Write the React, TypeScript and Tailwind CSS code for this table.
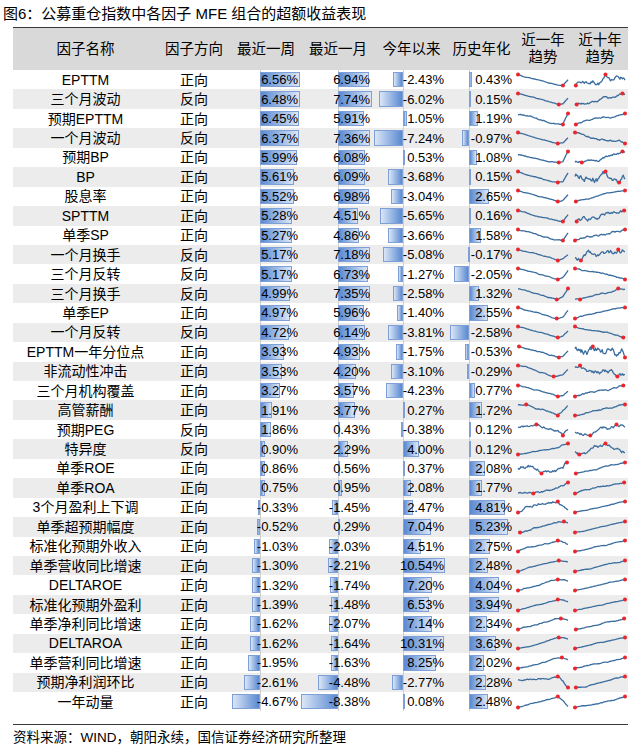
import React from "react";

type Row = {
  name: string;
  dir: string;
  week: number;
  month: number;
  ytd: number;
  hist: number;
};

const rows: Row[] = [
  { name: "EPTTM", dir: "正向", week: 6.56, month: 6.94, ytd: -2.43, hist: 0.43 },
  { name: "三个月波动", dir: "反向", week: 6.48, month: 7.74, ytd: -6.02, hist: 0.15 },
  { name: "预期EPTTM", dir: "正向", week: 6.45, month: 5.91, ytd: 1.05, hist: 1.19 },
  { name: "一个月波动", dir: "反向", week: 6.37, month: 7.36, ytd: -7.24, hist: -0.97 },
  { name: "预期BP", dir: "正向", week: 5.99, month: 6.08, ytd: 0.53, hist: 1.08 },
  { name: "BP", dir: "正向", week: 5.61, month: 6.09, ytd: -3.68, hist: 0.15 },
  { name: "股息率", dir: "正向", week: 5.52, month: 6.98, ytd: -3.04, hist: 2.65 },
  { name: "SPTTM", dir: "正向", week: 5.28, month: 4.51, ytd: -5.65, hist: 0.16 },
  { name: "单季SP", dir: "正向", week: 5.27, month: 4.86, ytd: -3.66, hist: 1.58 },
  { name: "一个月换手", dir: "反向", week: 5.17, month: 7.18, ytd: -5.08, hist: -0.17 },
  { name: "三个月反转", dir: "反向", week: 5.17, month: 6.73, ytd: -1.27, hist: -2.05 },
  { name: "三个月换手", dir: "反向", week: 4.99, month: 7.35, ytd: -2.58, hist: 1.32 },
  { name: "单季EP", dir: "正向", week: 4.97, month: 5.96, ytd: -1.4, hist: 2.55 },
  { name: "一个月反转", dir: "反向", week: 4.72, month: 6.14, ytd: -3.81, hist: -2.58 },
  { name: "EPTTM一年分位点", dir: "正向", week: 3.93, month: 4.93, ytd: -1.75, hist: -0.53 },
  { name: "非流动性冲击", dir: "正向", week: 3.53, month: 4.2, ytd: -3.1, hist: -0.29 },
  { name: "三个月机构覆盖", dir: "正向", week: 3.27, month: 3.57, ytd: -4.23, hist: 0.77 },
  { name: "高管薪酬", dir: "正向", week: 1.91, month: 3.77, ytd: 0.27, hist: 1.72 },
  { name: "预期PEG", dir: "反向", week: 1.86, month: 0.43, ytd: -0.38, hist: 0.12 },
  { name: "特异度", dir: "反向", week: 0.9, month: 2.29, ytd: 4.0, hist: 0.12 },
  { name: "单季ROE", dir: "正向", week: 0.86, month: 0.56, ytd: 0.37, hist: 2.08 },
  { name: "单季ROA", dir: "正向", week: 0.75, month: 0.95, ytd: 2.08, hist: 1.77 },
  { name: "3个月盈利上下调", dir: "正向", week: -0.33, month: -1.45, ytd: 2.47, hist: 4.81 },
  { name: "单季超预期幅度", dir: "正向", week: -0.52, month: 0.29, ytd: 7.04, hist: 5.23 },
  { name: "标准化预期外收入", dir: "正向", week: -1.03, month: -2.03, ytd: 4.51, hist: 2.75 },
  { name: "单季营收同比增速", dir: "正向", week: -1.3, month: -2.21, ytd: 10.54, hist: 2.48 },
  { name: "DELTAROE", dir: "正向", week: -1.32, month: -1.74, ytd: 7.2, hist: 4.04 },
  { name: "标准化预期外盈利", dir: "正向", week: -1.39, month: -1.48, ytd: 6.53, hist: 3.94 },
  { name: "单季净利同比增速", dir: "正向", week: -1.62, month: -2.07, ytd: 7.14, hist: 2.34 },
  { name: "DELTAROA", dir: "正向", week: -1.62, month: -1.64, ytd: 10.31, hist: 3.63 },
  { name: "单季营利同比增速", dir: "正向", week: -1.95, month: -1.63, ytd: 8.25, hist: 2.02 },
  { name: "预期净利润环比", dir: "正向", week: -2.61, month: -4.48, ytd: -2.77, hist: 2.28 },
  { name: "一年动量", dir: "正向", week: -4.67, month: -8.38, ytd: 0.08, hist: 2.48 },
];

// seeded random so the sparklines stay the same between renders
function rng(seed: number) {
  let a = seed >>> 0;
  return () => {
    a = (a + 0x6d2b79f5) >>> 0;
    let t = a;
    t = Math.imul(t ^ (t >>> 15), t | 1);
    t ^= t + Math.imul(t ^ (t >>> 7), t | 61);
    return ((t ^ (t >>> 14)) >>> 0) / 4294967296;
  };
}

function yearSeries(r: Row, i: number) {
  const rand = rng(i * 97 + 13);
  const pts: number[] = [];
  let v = 0;
  const first = r.ytd - r.month;
  const mid = r.month - r.week;
  for (let k = 0; k < 50; k++) {
    let step = 0;
    if (k < 40) step = first / 40;
    else if (k < 45) step = mid / 5;
    else step = r.week / 5;
    v += step + (rand() - 0.5) * 0.55;
    pts.push(v);
  }
  return pts;
}

function tenYearSeries(r: Row, i: number) {
  const rand = rng(i * 31 + 7);
  const pts: number[] = [];
  let v = 0;
  for (let k = 0; k < 60; k++) {
    v += r.hist / 5 + (rand() - 0.5) * 1.6;
    pts.push(v);
  }
  return pts;
}

const Spark = ({ pts, w }: { pts: number[]; w: number }) => {
  const h = 16;
  const min = Math.min(...pts);
  const max = Math.max(...pts);
  const span = max - min || 1;
  const xy = pts.map((p, k) => [
    2 + (k / (pts.length - 1)) * (w - 4),
    2.5 + (1 - (p - min) / span) * (h - 5),
  ]);
  const iMin = pts.indexOf(min);
  const iMax = pts.indexOf(max);
  return (
    <svg width={w} height={h} className="block">
      <polyline
        points={xy.map((p) => p.join(",")).join(" ")}
        fill="none"
        stroke="#3b6d9e"
        strokeWidth={1.3}
        strokeLinejoin="round"
      />
      <circle cx={xy[iMax][0]} cy={xy[iMax][1]} r={2} fill="#e8262c" />
      <circle cx={xy[iMin][0]} cy={xy[iMin][1]} r={2} fill="#e8262c" />
    </svg>
  );
};

const fmt = (v: number) => v.toFixed(2) + "%";

const BarCell = ({ v, axis, scale, pr }: { v: number; axis: number; scale: number; pr: string }) => {
  const len = Math.abs(v) * scale;
  return (
    <div className={`relative h-full flex items-center justify-end ${pr}`}>
      <div className="absolute top-0 bottom-0 w-px bg-[#cfcfcf]" style={{ left: axis }} />
      {v >= 0 ? (
        <div
          className="absolute top-[2px] bottom-[2px] border border-[#7ea0d6] bg-gradient-to-r from-[#5a89d0] to-[#dbe6f6]"
          style={{ left: axis, width: len }}
        />
      ) : (
        <div
          className="absolute top-[2px] bottom-[2px] border border-[#7ea0d6] bg-gradient-to-l from-[#5a89d0] to-[#dbe6f6]"
          style={{ left: axis - len, width: len }}
        />
      )}
      <span className="relative text-[13px] leading-none">{fmt(v)}</span>
    </div>
  );
};

const cols = "grid grid-cols-[145px_72px_72px_72px_75px_65px_58px_56px]";

export default function App() {
  return (
    <div
      className="w-[630px] h-[751px] bg-white text-black overflow-hidden"
      style={{ fontFamily: '"Liberation Sans", "Noto Sans CJK SC", sans-serif' }}
    >
      <div className="h-[27px] pl-[3px] flex items-center text-[15px] leading-none">
        图6：公募重仓指数中各因子 MFE 组合的超额收益表现
      </div>
      <div className="ml-[13px] w-[615px] border-t-[1.5px] border-[#3a3a3a]">
        <div className={`${cols} h-[42px] bg-[#d9d9d9] text-[14.5px] leading-[17px]`}>
          <div className="flex items-center justify-center">因子名称</div>
          <div className="flex items-center justify-center">因子方向</div>
          <div className="flex items-center justify-center">最近一周</div>
          <div className="flex items-center justify-center">最近一月</div>
          <div className="flex items-center justify-center">今年以来</div>
          <div className="flex items-center justify-center">历史年化</div>
          <div className="flex flex-col items-center justify-center">
            <span>近一年</span>
            <span>趋势</span>
          </div>
          <div className="flex flex-col items-center justify-center">
            <span>近十年</span>
            <span>趋势</span>
          </div>
        </div>
        {rows.map((r, i) => (
          <div
            key={r.name}
            className={`${cols} h-[19.45px] ${i % 2 === 1 ? "bg-[#ececec]" : "bg-white"}`}
          >
            <div className="flex items-center justify-center text-[14px] leading-none">{r.name}</div>
            <div className="flex items-center justify-center text-[14px] leading-none">{r.dir}</div>
            <BarCell v={r.week} axis={30} scale={6.1} pr="pr-[4px]" />
            <BarCell v={r.month} axis={36} scale={4.4} pr="pr-[4px]" />
            <BarCell v={r.ytd} axis={29} scale={4.0} pr="pr-[5px]" />
            <BarCell v={r.hist} axis={20} scale={7.5} pr="pr-[2px]" />
            <div className="flex items-center justify-center">
              <Spark pts={yearSeries(r, i)} w={54} />
            </div>
            <div className="flex items-center justify-center">
              <Spark pts={tenYearSeries(r, i)} w={54} />
            </div>
          </div>
        ))}
        <div className="h-[13px]" />
        <div className="border-t-[1.5px] border-[#3a3a3a] pt-[6px] text-[13.5px] leading-none">
          资料来源：WIND，朝阳永续，国信证券经济研究所整理
        </div>
      </div>
    </div>
  );
}
